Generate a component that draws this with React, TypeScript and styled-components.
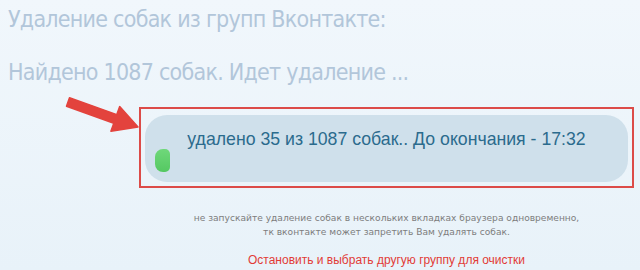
import React from 'react'
import styled, { createGlobalStyle } from 'styled-components'

const GlobalStyle = createGlobalStyle`
  html, body {
    margin: 0;
    padding: 0;
  }
  body {
    width: 640px;
    height: 270px;
    overflow: hidden;
    background: linear-gradient(180deg, #f1f7fc 0%, #e8f2f9 100%);
  }
`

const Page = styled.div`
  position: relative;
  width: 640px;
  height: 270px;
  padding: 4px 0 0 8px;
  box-sizing: border-box;
`

const Headings = styled.div`
  display: flex;
  flex-direction: column;
  gap: 23px;
`

const Heading = styled.h1`
  margin: 0;
  font-family: 'DejaVu Sans Condensed', 'DejaVu Sans', sans-serif;
  font-weight: normal;
  font-size: 23px;
  letter-spacing: -0.75px;
  line-height: 30px;
  color: #b2c6da;
  white-space: nowrap;
`

const Column = styled.div`
  width: 495px;
  margin-left: 131px;
  margin-top: 20px;
  display: flex;
  flex-direction: column;
  align-items: center;
`

const Frame = styled.div`
  width: 100%;
  height: 81px;
  box-sizing: border-box;
  border: 2px solid #dc4b48;
  padding: 6px 4px 4px 4px;
`

const Pill = styled.div`
  height: 67px;
  border-radius: 22px;
  background: #cfe0eb;
  box-sizing: border-box;
  padding: 14px 10px 10px 10px;
  display: flex;
  flex-direction: column;
  justify-content: space-between;
`

const Status = styled.div`
  font-family: 'Liberation Sans', Arial, sans-serif;
  font-size: 17.7px;
  line-height: 20px;
  color: #2b6b8d;
  text-align: center;
  white-space: nowrap;
`

const Track = styled.div`
  height: 25px;
  display: flex;
`

const Fill = styled.div`
  height: 100%;
  border-radius: 8px 5px 5px 8px;
  background: linear-gradient(180deg, #6fd87a 0%, #55c862 100%);
`

const Note = styled.p`
  margin: 23px 0 0 0;
  font-family: 'DejaVu Sans', Verdana, sans-serif;
  font-size: 9.1px;
  line-height: 14px;
  color: #7d7d7d;
  text-align: center;
  white-space: nowrap;
`

const StopLink = styled.a`
  margin-top: 14px;
  font-family: 'Liberation Sans', Arial, sans-serif;
  font-size: 12px;
  color: #e23b36;
  text-decoration: none;
  cursor: pointer;
`

const Arrow = styled.svg`
  position: absolute;
  left: 60px;
  top: 92px;
`

const App: React.FC = () => {
  const deleted = 35
  const total = 1087
  const progress = (deleted / total) * 100

  return (
    <>
      <GlobalStyle />
      <Page>
        <Headings>
          <Heading>Удаление собак из групп Вконтакте:</Heading>
          <Heading>Найдено {total} собак. Идет удаление ...</Heading>
        </Headings>
        <Column>
          <Frame>
            <Pill>
              <Status>удалено {deleted} из {total} собак.. До окончания - 17:32</Status>
              <Track>
                <Fill style={{ width: `${Math.max(progress, 3.1)}%` }} />
              </Track>
            </Pill>
          </Frame>
          <Note>
            не запускайте удаление собак в нескольких вкладках браузера одновременно,
            <br />
            тк вконтакте может запретить Вам удалять собак.
          </Note>
          <StopLink>Остановить и выбрать другую группу для очистки</StopLink>
        </Column>
        <Arrow width='85' height='45' viewBox='60 92 85 45'>
          <polygon
            points='69.5,97.7 116.8,114.6 119.7,106.6 138,127 110.9,131.2 113.8,123.2 66.5,106.3'
            fill='#e3433d'
            stroke='#e3433d'
            strokeWidth='1.5'
            strokeLinejoin='round'
          />
        </Arrow>
      </Page>
    </>
  )
}

export default App
